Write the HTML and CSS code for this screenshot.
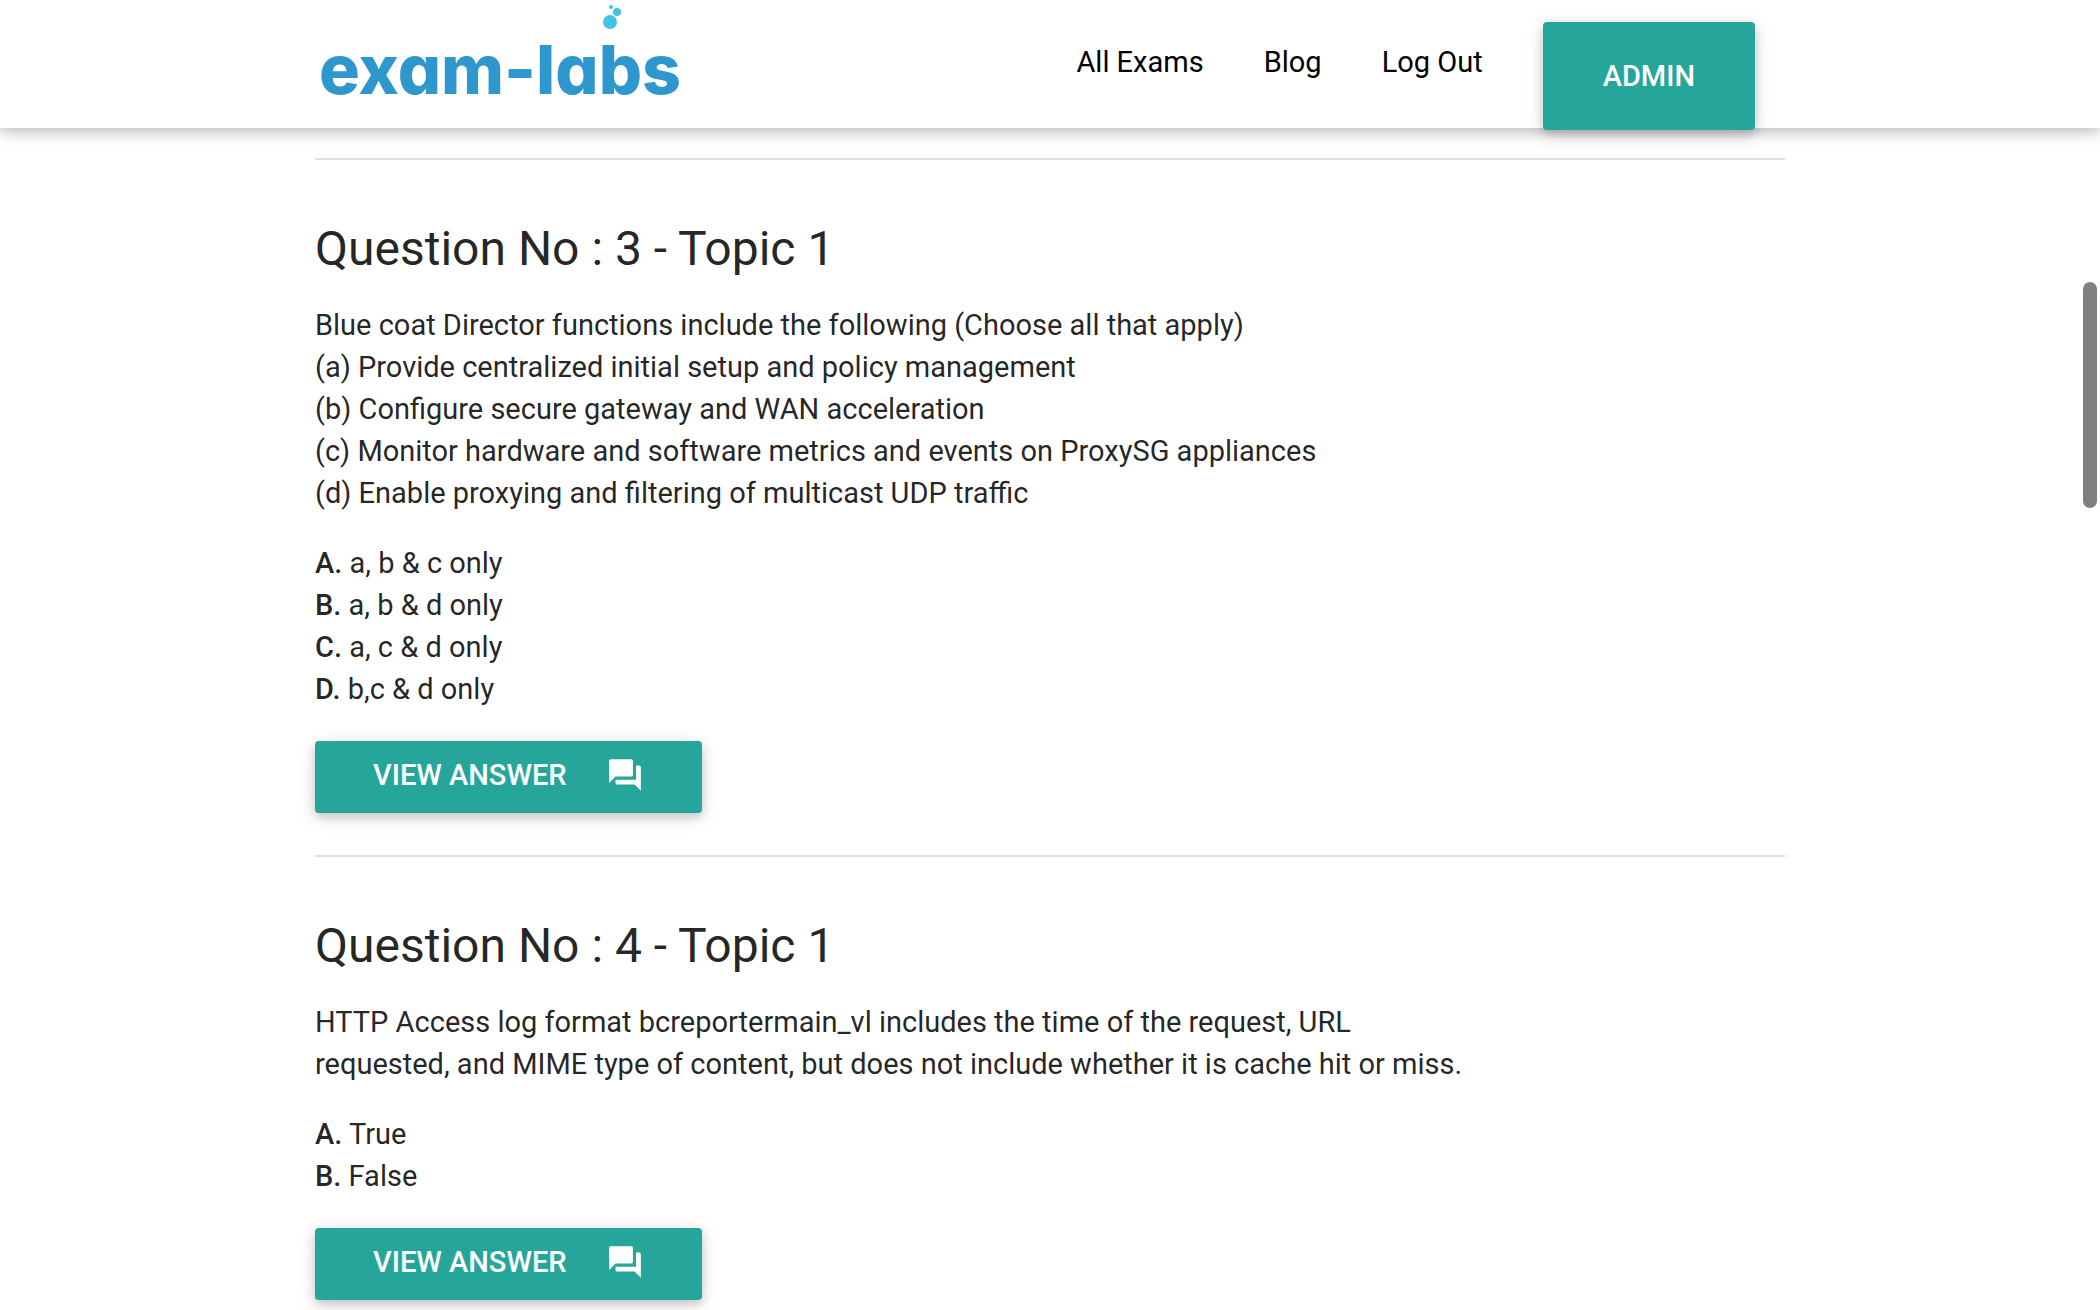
FILE: index.html
```html
<!DOCTYPE html>
<html lang="en">
<head>
    <meta charset="UTF-8">
    <meta name="viewport" content="width=device-width, initial-scale=1.0">
    <title>Exam-Labs</title>
    <link rel="stylesheet" href="styles.css">
</head>
<body>
    <!-- Icons -->
    <svg class="sprite" aria-hidden="true">
        <symbol id="icon-answer" viewBox="0 0 24 24">
            <path d="M21 6h-2v9H6v2c0 .55.45 1 1 1h11l4 4V7c0-.55-.45-1-1-1zm-4 6V3c0-.55-.45-1-1-1H3c-.55 0-1 .45-1 1v14l4-4h10c.55 0 1-.45 1-1z"/>
        </symbol>
    </svg>

    <!-- Header -->
    <header class="header">
        <div class="container header-inner">
            <a href="#" class="logo">exam-labs<svg class="bubbles" viewBox="0 0 18 26" aria-hidden="true">
                    <circle cx="7" cy="18" r="7"/>
                    <circle cx="14" cy="8" r="4"/>
                    <circle cx="8" cy="3" r="2"/>
                </svg></a>
            <nav class="nav">
                <a href="#">All Exams</a>
                <a href="#">Blog</a>
                <a href="#">Log Out</a>
                <a href="#" class="btn btn-admin">Admin</a>
            </nav>
        </div>
    </header>

    <!-- Questions -->
    <main class="container questions">
        <hr>

        <section class="question">
            <h2>Question No : 3 - Topic 1</h2>
            <p>
                Blue coat Director functions include the following (Choose all that apply)<br>
                (a) Provide centralized initial setup and policy management<br>
                (b) Configure secure gateway and WAN acceleration<br>
                (c) Monitor hardware and software metrics and events on ProxySG appliances<br>
                (d) Enable proxying and filtering of multicast UDP traffic
            </p>
            <p>
                <b>A.</b> a, b &amp; c only<br>
                <b>B.</b> a, b &amp; d only<br>
                <b>C.</b> a, c &amp; d only<br>
                <b>D.</b> b,c &amp; d only
            </p>
            <button type="button" class="btn btn-answer">View Answer<svg class="icon" aria-hidden="true"><use href="#icon-answer"/></svg></button>
        </section>

        <hr>

        <section class="question">
            <h2>Question No : 4 - Topic 1</h2>
            <p>
                HTTP Access log format bcreportermain_vl includes the time of the request, URL<br>
                requested, and MIME type of content, but does not include whether it is cache hit or miss.
            </p>
            <p>
                <b>A.</b> True<br>
                <b>B.</b> False
            </p>
            <button type="button" class="btn btn-answer">View Answer<svg class="icon" aria-hidden="true"><use href="#icon-answer"/></svg></button>
        </section>
    </main>

    <div class="scroll-thumb"></div>
</body>
</html>
```
FILE: styles.css
```css
* {
    box-sizing: border-box;
}

body {
    margin: 0;
    min-height: 100vh;
    font-family: Roboto, sans-serif;
    font-size: 29px;
    line-height: 42px;
    color: rgba(0, 0, 0, 0.87);
    background: #fff;
}

.sprite {
    display: none;
}

.container {
    width: 70%;
    margin: 0 auto;
}

/* Header */
.header {
    position: sticky;
    top: 0;
    z-index: 10;
    height: 128px;
    background: #fff;
    box-shadow: 0 4px 10px rgba(0, 0, 0, 0.16), 0 4px 20px rgba(0, 0, 0, 0.12);
}

.header-inner {
    display: flex;
    justify-content: space-between;
    align-items: flex-start;
}

.logo {
    position: relative;
    padding: 20px 0 0 4px;
    font-family: Inter, sans-serif;
    font-size: 68px;
    font-weight: 800;
    font-feature-settings: "cv11";
    line-height: 98px;
    color: #2e98ce;
    text-decoration: none;
}

.bubbles {
    position: absolute;
    top: 4px;
    right: 60px;
    width: 18px;
    height: 26px;
    fill: #46c3e4;
}

.nav {
    display: flex;
    align-items: flex-start;
}

.nav a {
    padding: 0 30px;
    line-height: 124px;
    color: #000;
    text-decoration: none;
}

/* Buttons */
.btn {
    border: none;
    border-radius: 4px;
    background: #26a69a;
    color: #fff;
    font-family: inherit;
    font-size: 29px;
    font-weight: 500;
    text-transform: uppercase;
    cursor: pointer;
    box-shadow: 0 4px 10px rgba(0, 0, 0, 0.16), 0 4px 20px rgba(0, 0, 0, 0.12);
}

.nav .btn-admin {
    margin: 22px 30px 0;
    padding: 0 60px;
    line-height: 108px;
    color: #fff;
}

.btn-answer {
    display: flex;
    align-items: center;
    gap: 39px;
    height: 72px;
    padding: 0 58px 4px;
}

.icon {
    width: 38px;
    height: 38px;
    fill: currentColor;
}

/* Questions */
.questions {
    padding: 30px 0 10px;
}

.questions hr {
    height: 2px;
    margin: 0;
    border: none;
    background: #e0e0e0;
}

.question {
    padding: 62px 0 42px;
}

.question:last-child {
    padding-bottom: 0;
}

.question h2 {
    margin: 0 0 29px;
    font-size: 48px;
    font-weight: 400;
    line-height: 53px;
}

.question p {
    margin: 0 0 28px;
}

.question b {
    font-weight: 500;
}

.question .btn {
    margin-top: 31px;
}

/* Scrollbar thumb */
.scroll-thumb {
    position: fixed;
    top: 282px;
    right: 3px;
    width: 14px;
    height: 226px;
    border-radius: 7px;
    background: #808080;
}
```
